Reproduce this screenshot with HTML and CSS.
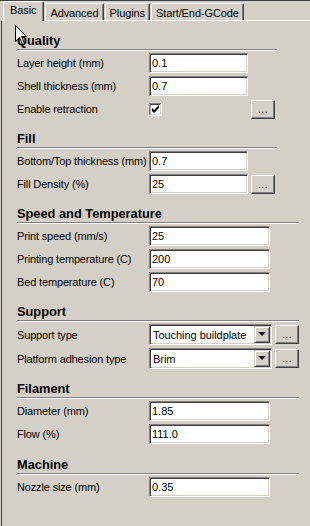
FILE: index.html
```html
<!DOCTYPE html>
<html lang="en">
<head>
  <meta charset="UTF-8">
  <title>Basic settings</title>
  <link rel="stylesheet" href="styles.css">
</head>
<body>
  <div class="window">
    <!-- Onglets -->
    <div class="tabs">
      <div class="tab active">Basic</div>
      <div class="tab">Advanced</div>
      <div class="tab">Plugins</div>
      <div class="tab">Start/End-GCode</div>
    </div>

    <div class="panel">
      <div class="group narrow">
        <div class="group-title">Quality</div>
        <div class="rows">
          <div class="row"><span class="label">Layer height (mm)</span><span class="field">0.1</span></div>
          <div class="row"><span class="label">Shell thickness (mm)</span><span class="field">0.7</span></div>
          <div class="row">
            <span class="label">Enable retraction</span>
            <span class="check-cell">
              <svg class="check" width="13" height="13" viewBox="0 0 13 13">
                <rect x="0" y="0" width="13" height="13" fill="#fff"/>
                <path d="M0 12.5V0.5H12.5" stroke="#808080" fill="none"/>
                <path d="M1 11.5V1.5H11.5" stroke="#404040" fill="none"/>
                <path d="M0.5 12.5H12.5V0" stroke="#fff" fill="none"/>
                <path d="M1.5 11.5H11.5V1" stroke="#d4d0c8" fill="none"/>
                <polygon points="3,5 5,7 10,2 10,5 5,10 3,8" fill="#000"/>
              </svg>
            </span>
            <span class="btn">...</span>
          </div>
        </div>
      </div>

      <div class="group narrow">
        <div class="group-title">Fill</div>
        <div class="rows">
          <div class="row"><span class="label">Bottom/Top thickness (mm)</span><span class="field">0.7</span></div>
          <div class="row"><span class="label">Fill Density (%)</span><span class="field">25</span><span class="btn">...</span></div>
        </div>
      </div>

      <div class="group">
        <div class="group-title">Speed and Temperature</div>
        <div class="rows">
          <div class="row"><span class="label">Print speed (mm/s)</span><span class="field">25</span></div>
          <div class="row"><span class="label">Printing temperature (C)</span><span class="field">200</span></div>
          <div class="row"><span class="label">Bed temperature (C)</span><span class="field">70</span></div>
        </div>
      </div>

      <div class="group">
        <div class="group-title">Support</div>
        <div class="rows">
          <div class="row tall">
            <span class="label">Support type</span>
            <span class="combo"><span class="combo-text">Touching buildplate</span><span class="combo-arrow"></span></span>
            <span class="btn">...</span>
          </div>
          <div class="row tall">
            <span class="label">Platform adhesion type</span>
            <span class="combo"><span class="combo-text">Brim</span><span class="combo-arrow"></span></span>
            <span class="btn">...</span>
          </div>
        </div>
      </div>

      <div class="group spaced">
        <div class="group-title">Filament</div>
        <div class="rows">
          <div class="row"><span class="label">Diameter (mm)</span><span class="field">1.85</span></div>
          <div class="row"><span class="label">Flow (%)</span><span class="field">111.0</span></div>
        </div>
      </div>

      <div class="group">
        <div class="group-title">Machine</div>
        <div class="rows">
          <div class="row"><span class="label">Nozzle size (mm)</span><span class="field">0.35</span></div>
        </div>
      </div>
    </div>

    <!-- Curseur de la souris -->
    <svg class="cursor" width="13" height="21" viewBox="0 0 13 21">
      <path d="M0.5 0.5V16.5L4.5 12.5L7.5 19.5L9.5 18.5L6.5 11.5H11.5Z" fill="#fff" stroke="#000"/>
    </svg>
  </div>
</body>
</html>
```

FILE: styles.css
```css
body {
  margin: 0;
  background: #d4d0c8;
  font-family: "Liberation Sans", Arial, sans-serif;
  font-size: 11px;
  color: #000;
}
.window {
  position: relative;
  width: 310px;
  height: 526px;
  overflow: hidden;
  border-top: 1px solid #404040;
  box-sizing: border-box;
}
.tabs {
  display: flex;
  align-items: flex-end;
  height: 19px;
  padding-left: 3px;
  position: relative;
  z-index: 1;
}
.tab {
  height: 16px;
  line-height: 18px;
  padding: 0 4px 0 4px;
  margin-right: 1px;
  border-top: 1px solid #fff;
  border-left: 1px solid #fff;
  border-right: 1px solid #404040;
  box-shadow: inset -1px 0 #808080;
  border-radius: 2px 2px 0 0;
  background: #d4d0c8;
  letter-spacing: -0.1px;
}
.tab.active {
  height: 19px;
  line-height: 17px;
  margin-bottom: -1px;
  padding: 0 7px 0 6px;
}
.panel {
  border-top: 1px solid #fff;
  border-left: 1px solid #404040;
  margin-left: 1px;
  height: 510px;
  padding: 12px 0 0 15px;
  box-sizing: border-box;
}
.group {
  width: 282px;
  margin-bottom: 12px;
}
.group.narrow {
  width: 260px;
}
.group.spaced {
  margin-bottom: 13px;
}
.group-title {
  font-size: 12.8px;
  font-weight: bold;
  line-height: 16px;
  border-bottom: 1px solid #808080;
  box-shadow: 0 1px #fff;
}
.rows {
  display: flex;
  flex-direction: column;
  gap: 3px;
  padding-top: 3px;
}
.row {
  display: flex;
  align-items: center;
  height: 20px;
}
.row.tall {
  height: 21px;
}
.label {
  width: 132px;
  flex: none;
  white-space: nowrap;
  letter-spacing: -0.15px;
}
.field {
  width: 121px;
  height: 20px;
  line-height: 18px;
  padding-left: 2px;
  box-sizing: border-box;
  background: #fff;
  border: 1px solid;
  border-color: #808080 #fff #fff #808080;
  box-shadow: inset 1px 1px #404040, inset -1px -1px #d4d0c8;
}
.narrow .field {
  width: 99px;
}
.check-cell {
  width: 99px;
  display: flex;
  align-items: center;
}
.btn {
  width: 24px;
  height: 19px;
  margin-left: 3px;
  box-sizing: border-box;
  text-align: center;
  line-height: 17px;
  font-size: 10px;
  letter-spacing: 0.5px;
  background: #d4d0c8;
  border: 1px solid;
  border-color: #fff #404040 #404040 #fff;
  box-shadow: inset -1px -1px #808080;
}
.combo {
  width: 124px;
  height: 21px;
  display: flex;
  align-items: center;
  justify-content: space-between;
  padding: 1px;
  box-sizing: border-box;
  background: #fff;
  border: 1px solid;
  border-color: #808080 #fff #fff #808080;
  box-shadow: inset 1px 1px #404040, inset -1px -1px #d4d0c8;
}
.combo-text {
  padding-left: 2px;
  font-size: 11px;
  letter-spacing: -0.05px;
}
.combo-arrow {
  position: relative;
  width: 16px;
  height: 17px;
  box-sizing: border-box;
  background: #d4d0c8;
  border: 1px solid;
  border-color: #d4d0c8 #404040 #404040 #d4d0c8;
  box-shadow: inset 1px 1px #fff, inset -1px -1px #808080;
}
.combo-arrow::after {
  content: "";
  position: absolute;
  left: 3px;
  top: 5px;
  border-left: 4px solid transparent;
  border-right: 4px solid transparent;
  border-top: 4px solid #000;
}
.cursor {
  position: absolute;
  left: 15px;
  top: 24px;
  z-index: 2;
}
```
